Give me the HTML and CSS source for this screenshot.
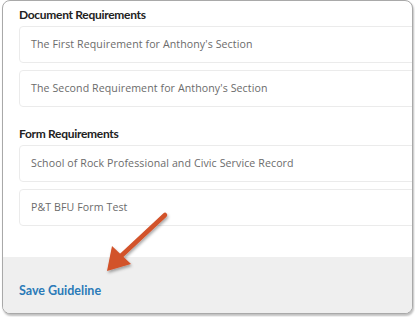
FILE: index.html
```
<!DOCTYPE html>
<html lang="en">
<head>
    <meta charset="UTF-8">
    <meta name="viewport" content="width=device-width, initial-scale=1.0">
    <title>Guideline Requirements</title>
    <link rel="stylesheet" href="styles.css">
</head>
<body>
    <div class="card">
        <div class="content">
            <div class="group">
                <h2>Document Requirements</h2>
                <div class="row">The First Requirement for Anthony's Section</div>
                <div class="row">The Second Requirement for Anthony's Section</div>
            </div>
            <div class="group second">
                <h2>Form Requirements</h2>
                <div class="row">School of Rock Professional and Civic Service Record</div>
                <div class="row">P&amp;T BFU Form Test</div>
            </div>
        </div>
        <div class="footer">
            <a href="#" class="save">Save Guideline</a>
        </div>
    </div>

    <!-- callout arrow -->
    <svg class="arrow" width="415" height="317" viewBox="0 0 415 317">
        <defs>
            <filter id="shadow" x="-20%" y="-20%" width="140%" height="140%">
                <feDropShadow dx="1" dy="2" stdDeviation="1.5" flood-color="#000" flood-opacity="0.35"/>
            </filter>
        </defs>
        <g filter="url(#shadow)">
            <line x1="165" y1="215" x2="121" y2="256" stroke="#d2522a" stroke-width="4.5" stroke-linecap="round"/>
            <polygon points="107,271 112,246 131,264" fill="#d2522a"/>
        </g>
    </svg>
</body>
</html>
```

FILE: styles.css
```
/* Page */
body {
    margin: 0;
    background: #fff;
    font-family: 'Lato', 'Open Sans', sans-serif;
    position: relative;
    height: 317px;
    overflow: hidden;
}

/* Card */
.card {
    margin-left: 2px;
    width: 409px;
    height: 312px;
    border: 1px solid #a9a9a9;
    border-radius: 8px;
    box-shadow: 1px 2px 2px rgba(0, 0, 0, 0.25);
    overflow: hidden;
    background: #fff;
    display: flex;
    flex-direction: column;
}

.content {
    flex: 1;
    padding: 6px 0 0 16px;
}

.group h2 {
    font-size: 12px;
    line-height: 16px;
    font-weight: 700;
    letter-spacing: -0.3px;
    color: #222;
    margin: 0 0 3px;
}

.group.second {
    margin-top: 19px;
}

/* Requirement rows */
.row {
    height: 35px;
    line-height: 35px;
    margin-right: -12px;
    margin-bottom: 7px;
    padding-left: 11px;
    border: 1px solid #ebebeb;
    border-radius: 4px;
    font-family: 'Open Sans', sans-serif;
    font-size: 10.6px;
    color: #6b6b6b;
    letter-spacing: 0.1px;
}

.row:last-child {
    margin-bottom: 0;
}

/* Footer */
.footer {
    height: 56px;
    background: #efefef;
    padding-left: 16px;
    display: flex;
    align-items: center;
    padding-top: 10px;
    box-sizing: border-box;
}

.save {
    font-size: 12.5px;
    font-weight: 700;
    color: #2a7ab8;
    text-decoration: none;
}

/* Annotation */
.arrow {
    position: absolute;
    left: 0;
    top: 0;
    pointer-events: none;
}
```
